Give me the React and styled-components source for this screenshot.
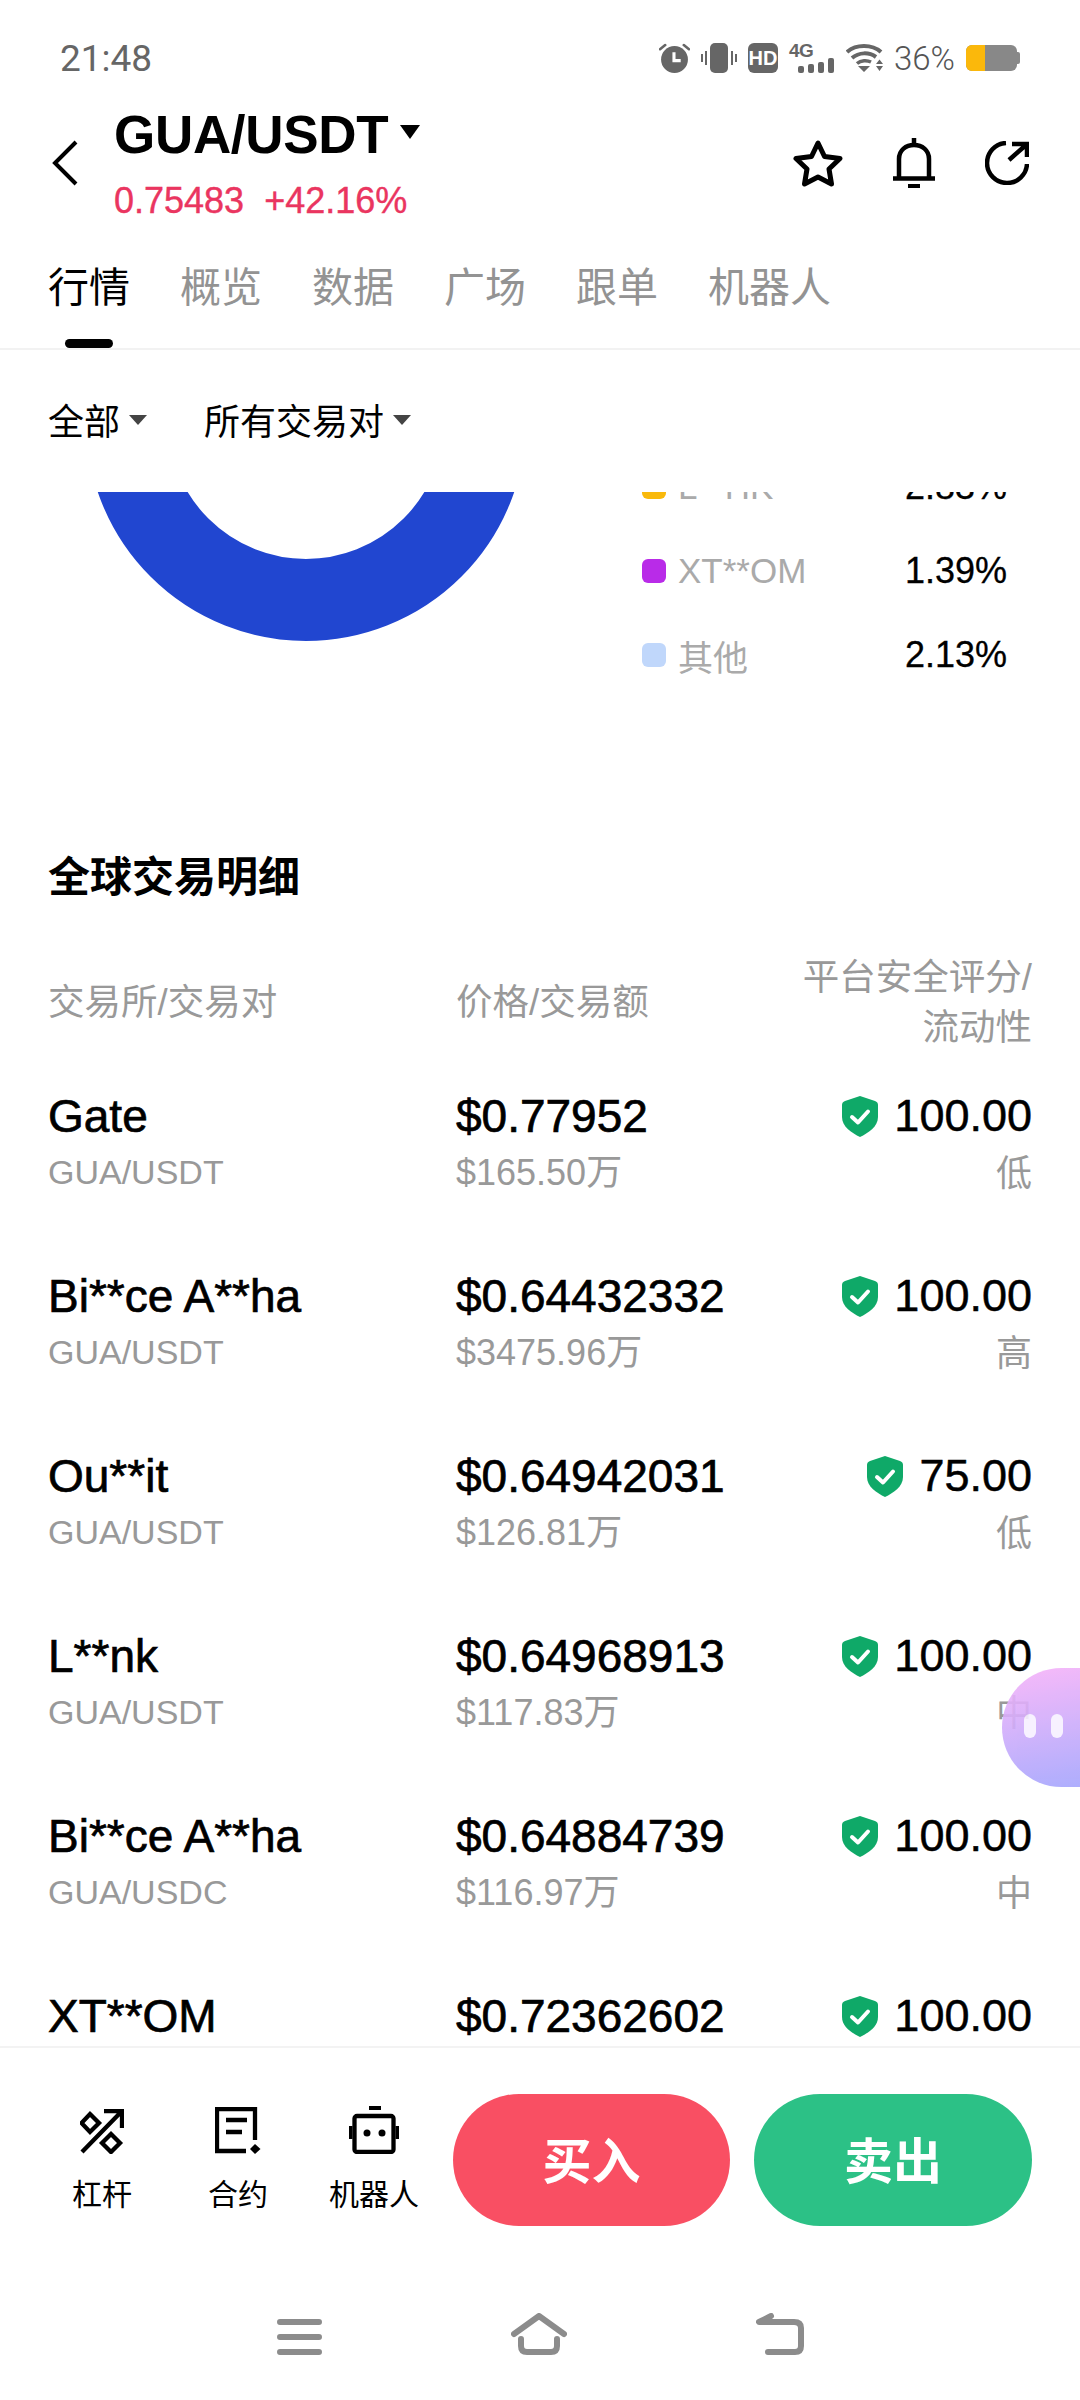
import React from "react";
import styled, { createGlobalStyle } from "styled-components";

const SANS = `"Liberation Sans", "Noto Sans CJK SC", sans-serif`;

const Global = createGlobalStyle`
  html, body { margin: 0; padding: 0; background: #fff; }
  * { box-sizing: border-box; }
`;

const Page = styled.div`
  position: relative;
  width: 1080px;
  height: 2400px;
  overflow: hidden;
  display: flex;
  flex-direction: column;
  background: #fff;
  color: #000;
  font-family: ${SANS};
`;

/* status bar */
const StatusBar = styled.div`
  flex: none;
  height: 116px;
  padding: 0 60px;
  display: flex;
  align-items: center;
  justify-content: space-between;
  color: #666;
`;
const Clock = styled.span`
  font-family: Roboto, sans-serif;
  font-size: 37px;
`;
const StatusIcons = styled.div`
  display: flex;
  align-items: center;
  gap: 11px;
`;
const HdBadge = styled.span`
  width: 30px;
  height: 30px;
  border-radius: 6px;
  background: #666;
  color: #fff;
  font: bold 20px/30px ${SANS};
  text-align: center;
`;
const Signal = styled.div`
  width: 46px;
  height: 30px;
  display: flex;
  flex-direction: column;
  color: #666;
`;
const SignalLabel = styled.span`
  font: bold 19px/15px ${SANS};
  letter-spacing: -0.5px;
`;
const Percent = styled.span`
  font-family: Roboto, sans-serif;
  font-weight: 300;
  font-size: 33px;
  color: #555;
`;
const Battery = styled.div`
  position: relative;
  width: 51px;
  height: 26px;
  margin-right: 3px;
  border-radius: 6px;
  overflow: hidden;
  background: #888;
`;
const BatteryLevel = styled.div`
  height: 100%;
  background: #fbb80b;
`;
const BatteryWrap = styled.div`
  display: flex;
  align-items: center;
  position: relative;
  &::after {
    content: "";
    position: absolute;
    right: 0;
    width: 3px;
    height: 12px;
    background: #888;
    border-radius: 0 2px 2px 0;
  }
`;

/* header */
const Header = styled.div`
  flex: none;
  height: 124px;
  padding: 0 51px 0 52px;
  display: flex;
  align-items: center;
`;
const BackIcon = styled.svg`
  width: 26px;
  height: 46px;
  margin-right: 36px;
  margin-top: -30px;
`;
const TitleBlock = styled.div`
  flex: 1;
  margin-top: -32px;
`;
const TitleRow = styled.div`
  display: flex;
  align-items: center;
  height: 58px;
`;
const Title = styled.span`
  font-size: 53px;
  font-weight: 700;
  letter-spacing: -0.3px;
`;
const TitleCaret = styled.span`
  width: 0;
  height: 0;
  margin-left: 12px;
  margin-top: -6px;
  border-left: 10px solid transparent;
  border-right: 10px solid transparent;
  border-top: 14px solid #000;
`;
const PriceLine = styled.div`
  margin-top: 19px;
  display: flex;
  gap: 20px;
  font-size: 36px;
  line-height: 36px;
  color: #ea3560;
  -webkit-text-stroke: 0.4px #ea3560;
`;
const HeaderActions = styled.div`
  display: flex;
  align-items: center;
  gap: 50px;
  margin-top: -30px;
`;

/* tabs */
const TabBar = styled.div`
  flex: none;
  height: 110px;
  padding: 0 48px;
  display: flex;
  gap: 50px;
  border-bottom: 2px solid #f2f2f2;
`;
const Tab = styled.div`
  display: flex;
  flex-direction: column;
  align-items: center;
  height: 108px;
  padding-top: 23px;
`;
const TabLabel = styled.span`
  font-size: 41px;
  line-height: 50px;
  color: ${(p) => (p.$active ? "#000" : "#939393")};
`;
const TabMark = styled.span`
  width: 48px;
  height: 9px;
  margin-top: auto;
  border-radius: 5px;
  background: #000;
`;

/* filter */
const FilterRow = styled.div`
  flex: none;
  height: 138px;
  margin-bottom: 4px;
  padding: 0 48px;
  display: flex;
  align-items: center;
  gap: 57px;
`;
const Filter = styled.div`
  display: flex;
  align-items: center;
  gap: 9px;
  font-size: 36px;
`;
const FilterCaret = styled.span`
  width: 0;
  height: 0;
  margin-top: 2px;
  border-left: 9px solid transparent;
  border-right: 9px solid transparent;
  border-top: 10px solid #444;
`;

/* scrolling content */
const Scroller = styled.div`
  flex: 1;
  min-height: 0;
  overflow: hidden;
`;
const ScrollContent = styled.div`
  margin-top: -291px;
`;
const ChartRow = styled.div`
  height: 496px;
  padding-left: 86px;
  display: flex;
`;
const Donut = styled.svg`
  flex: none;
  width: 440px;
  height: 440px;
`;
const Legend = styled.div`
  width: 365px;
  margin-left: 116px;
  align-self: flex-end;
`;
const LegendRow = styled.div`
  height: 84px;
  display: flex;
  align-items: center;
  font-size: 36px;
`;
const Swatch = styled.span`
  width: 24px;
  height: 24px;
  margin-right: 12px;
  border-radius: 6px;
  background: ${(p) => p.$color};
`;
const LegendName = styled.span`
  color: #aaa;
  font-size: 35px;
`;
const LegendValue = styled.span`
  margin-left: auto;
  -webkit-text-stroke: 0.3px #000;
`;
const SectionTitle = styled.h2`
  margin: 156px 0 0;
  padding: 0 48px;
  font-size: 42px;
  line-height: 50px;
  font-weight: 700;
`;
const TableGrid = styled.div`
  display: grid;
  grid-template-columns: 408px 1fr auto;
  padding: 0 48px;
`;
const HeaderGrid = styled(TableGrid)`
  margin-top: 50px;
  height: 100px;
  align-items: center;
  font-size: 36.5px;
  line-height: 50px;
  color: #999;
`;
const RightHead = styled.div`
  text-align: right;
`;
const Rows = styled.div`
  margin-top: 33px;
`;
const DataRow = styled(TableGrid)`
  height: 180px;
  align-content: start;
`;
const Main = styled.div`
  font-size: 46px;
  line-height: 60px;
  -webkit-text-stroke: 0.7px #000;
  white-space: nowrap;
`;
const Sub = styled.div`
  margin-top: ${(p) => (p.$money ? 3 : 2)}px;
  font-size: ${(p) => (p.$money ? 36 : 34)}px;
  line-height: 48px;
  color: #999;
`;
const Score = styled.div`
  display: flex;
  align-items: center;
  justify-content: flex-end;
  gap: 16px;
  font-size: 45px;
  line-height: 60px;
  -webkit-text-stroke: 0.5px #000;
`;
const Liquidity = styled.div`
  margin-top: 4px;
  font-size: 36px;
  line-height: 48px;
  color: #999;
  text-align: right;
`;
const Shield = styled.svg`
  width: 36px;
  height: 41px;
`;

/* bottom */
const BottomBar = styled.div`
  flex: none;
  height: 354px;
  border-top: 2px solid #f3f3f3;
  display: flex;
  flex-direction: column;
`;
const ActionRow = styled.div`
  display: flex;
  padding: 46px 48px 0 34px;
`;
const Tools = styled.div`
  display: flex;
  margin-right: 11px;
`;
const Tool = styled.div`
  width: 136px;
  display: flex;
  flex-direction: column;
  align-items: center;
  padding-top: 12px;
`;
const ToolIcon = styled.div`
  height: 48px;
  display: flex;
  align-items: flex-end;
`;
const ToolLabel = styled.span`
  margin-top: 21px;
  font-size: 30px;
  line-height: 40px;
`;
const TradeButton = styled.div`
  width: ${(p) => p.$w}px;
  height: 132px;
  margin-left: ${(p) => p.$gap}px;
  padding-bottom: 6px;
  border-radius: 66px;
  background: ${(p) => p.$color};
  color: #fff;
  display: flex;
  align-items: center;
  justify-content: center;
  font-size: 49px;
  font-weight: 700;
`;
const NavBar = styled.div`
  margin-top: 87px;
  display: flex;
  align-items: flex-end;
  justify-content: center;
  gap: 189px;
  color: #8c8c8c;
`;

const Bubble = styled.div`
  position: absolute;
  right: 0;
  top: 1668px;
  width: 78px;
  height: 119px;
  padding: 46px 17px 0 22px;
  border-radius: 60px 0 0 60px;
  background: linear-gradient(170deg, #f8b3f9, #a5a5fd);
  opacity: 0.9;
  display: flex;
  justify-content: space-between;
`;
const BubbleEye = styled.span`
  width: 12px;
  height: 24px;
  border-radius: 6px;
  background: #f7f0ff;
`;

const ShieldIcon = () => (
  <Shield viewBox="0 0 36 41">
    <path d="M18 0 L33 5 Q36 6 36 9 V21 C36 31 26 37 18 41 C10 37 0 31 0 21 V9 Q0 6 3 5 Z" fill="#0fa968" />
    <path d="M10 21 L16 26.5 L26 15.5" fill="none" stroke="#fff" strokeWidth="4" strokeLinecap="round" strokeLinejoin="round" />
  </Shield>
);

const stroke = { fill: "none", stroke: "currentColor" };

const legend = [
  { c: "#f9b90b", n: "L**HK", v: "2.83%" },
  { c: "#b92be8", n: "XT**OM", v: "1.39%" },
  { c: "#c0d7fb", n: "其他", v: "2.13%" },
];

const rows = [
  { n: "Gate", p: "GUA/USDT", a: "$0.77952", b: "$165.50万", s: "100.00", l: "低" },
  { n: "Bi**ce A**ha", p: "GUA/USDT", a: "$0.64432332", b: "$3475.96万", s: "100.00", l: "高" },
  { n: "Ou**it", p: "GUA/USDT", a: "$0.64942031", b: "$126.81万", s: "75.00", l: "低" },
  { n: "L**nk", p: "GUA/USDT", a: "$0.64968913", b: "$117.83万", s: "100.00", l: "中" },
  { n: "Bi**ce A**ha", p: "GUA/USDC", a: "$0.64884739", b: "$116.97万", s: "100.00", l: "中" },
  { n: "XT**OM", a: "$0.72362602", s: "100.00" },
];

const tabs = ["行情", "概览", "数据", "广场", "跟单", "机器人"];

export default function App() {
  return (
    <Page>
      <Global />
      <StatusBar>
        <Clock>21:48</Clock>
        <StatusIcons>
          <svg width="31" height="30" viewBox="0 0 30 29">
            <circle cx="15" cy="16" r="13" fill="#666" />
            <path d="M14.5 9 V17 H21" fill="none" stroke="#fff" strokeWidth="3" />
            <path d="M1 6 L6 2 M29 6 L24 2" stroke="#666" strokeWidth="2.5" strokeLinecap="round" />
          </svg>
          <svg width="36" height="30" viewBox="0 0 36 30">
            <rect x="9" y="0" width="18" height="30" rx="5" fill="#666" />
            <path d="M1 11 V19 M5 8 V22 M31 8 V22 M35 11 V19" stroke="#666" strokeWidth="2" />
          </svg>
          <HdBadge>HD</HdBadge>
          <Signal>
            <SignalLabel>4G</SignalLabel>
            <svg width="46" height="15" viewBox="0 0 46 15">
              <rect x="9" y="8" width="6" height="7" rx="2" fill="#666" />
              <rect x="19" y="6" width="6" height="9" rx="2" fill="#666" />
              <rect x="29" y="4" width="6" height="11" rx="2" fill="#666" />
              <rect x="39" y="0" width="6" height="15" rx="2" fill="#666" />
            </svg>
          </Signal>
          <svg width="37" height="28" viewBox="0 0 37 28" style={{ color: "#666" }}>
            <path d="M1 8 C10 0 26 0 35 8" {...stroke} strokeWidth="4" />
            <path d="M6 14 C13 8 23 8 30 13" {...stroke} strokeWidth="4" />
            <path d="M11 19.5 C15 16 21 16 25 18" {...stroke} strokeWidth="3.5" />
            <path d="M12 22 H24 L18 28 Z M30 20 L33.5 15.5 L37 20 Z M30 22 H37 L33.5 27 Z" fill="#666" />
          </svg>
          <Percent>36%</Percent>
          <BatteryWrap>
            <Battery>
              <BatteryLevel style={{ width: "37%" }} />
            </Battery>
          </BatteryWrap>
        </StatusIcons>
      </StatusBar>

      <Header>
        <BackIcon viewBox="0 0 26 46">
          <path d="M24 2 L3 23 L24 44" {...stroke} strokeWidth="4" />
        </BackIcon>
        <TitleBlock>
          <TitleRow>
            <Title>GUA/USDT</Title>
            <TitleCaret />
          </TitleRow>
          <PriceLine>
            <span>0.75483</span>
            <span>+42.16%</span>
          </PriceLine>
        </TitleBlock>
        <HeaderActions>
          <svg width="50" height="47" viewBox="0 0 50 47">
            <path d="M25 3 L31.5 16.5 L47 18.5 L36 29 L38.5 44 L25 37 L11.5 44 L14 29 L3 18.5 L18.5 16.5 Z" {...stroke} strokeWidth="5" strokeLinejoin="round" />
          </svg>
          <svg width="42" height="50" viewBox="0 0 42 50">
            <path d="M6 40 V21 C6 12 13 7 21 7 C29 7 36 12 36 21 V40" {...stroke} strokeWidth="4.5" />
            <path d="M0 40.5 H42 M21 0 V6" {...stroke} strokeWidth="4.5" />
            <rect x="15" y="46" width="12" height="4" fill="#000" />
          </svg>
          <svg width="44" height="44" viewBox="0 0 44 44">
            <path d="M21 2 A20 20 0 1 0 42 23" {...stroke} strokeWidth="4.5" />
            <path d="M24 19 L41 4 M27 3 H42 V16" {...stroke} strokeWidth="4.5" />
          </svg>
        </HeaderActions>
      </Header>

      <TabBar>
        {tabs.map((t, i) => (
          <Tab key={t}>
            <TabLabel $active={i === 0}>{t}</TabLabel>
            {i === 0 && <TabMark />}
          </Tab>
        ))}
      </TabBar>

      <FilterRow>
        <Filter>
          全部
          <FilterCaret />
        </Filter>
        <Filter>
          所有交易对
          <FilterCaret />
        </Filter>
      </FilterRow>

      <Scroller>
        <ScrollContent>
          <ChartRow>
            <Donut viewBox="0 0 440 440">
              <circle cx="220" cy="220" r="179" fill="none" stroke="#2146d0" strokeWidth="82" />
            </Donut>
            <Legend>
              {legend.map((l) => (
                <LegendRow key={l.n}>
                  <Swatch $color={l.c} />
                  <LegendName>{l.n}</LegendName>
                  <LegendValue>{l.v}</LegendValue>
                </LegendRow>
              ))}
            </Legend>
          </ChartRow>

          <SectionTitle>全球交易明细</SectionTitle>

          <HeaderGrid>
            <div>交易所/交易对</div>
            <div>价格/交易额</div>
            <RightHead>
              平台安全评分/
              <br />
              流动性
            </RightHead>
          </HeaderGrid>

          <Rows>
            {rows.map((r) => (
              <DataRow key={r.n + r.a}>
                <div>
                  <Main>{r.n}</Main>
                  {r.p && <Sub>{r.p}</Sub>}
                </div>
                <div>
                  <Main>{r.a}</Main>
                  {r.b && <Sub $money>{r.b}</Sub>}
                </div>
                <div>
                  <Score>
                    <ShieldIcon />
                    {r.s}
                  </Score>
                  {r.l && <Liquidity>{r.l}</Liquidity>}
                </div>
              </DataRow>
            ))}
          </Rows>
        </ScrollContent>
      </Scroller>

      <BottomBar>
        <ActionRow>
          <Tools>
            <Tool>
              <ToolIcon>
                <svg width="44" height="45" viewBox="0 0 44 45">
                  <path d="M2 43 L41 3 M24 2 H42 V19" {...stroke} strokeWidth="4.3" />
                  <path d="M10 5 L19 14 L10 23 L1.5 14 Z M31 25 L40 34 L31 43 L22 34 Z" {...stroke} strokeWidth="4.3" />
                </svg>
              </ToolIcon>
              <ToolLabel>杠杆</ToolLabel>
            </Tool>
            <Tool>
              <ToolIcon>
                <svg width="46" height="47" viewBox="0 0 46 47">
                  <path d="M31 44 H2 V2 H40 V33" {...stroke} strokeWidth="4.3" />
                  <path d="M11 13 H32 M11 25 H27" {...stroke} strokeWidth="4.3" />
                  <path d="M40 37 L45.5 42 L40 47 L35 42 Z" fill="#000" />
                </svg>
              </ToolIcon>
              <ToolLabel>合约</ToolLabel>
            </Tool>
            <Tool>
              <ToolIcon>
                <svg width="50" height="48" viewBox="0 0 50 48">
                  <rect x="20" y="0" width="12" height="4" fill="#000" />
                  <rect x="5.5" y="10" width="39" height="36" rx="2.5" {...stroke} strokeWidth="4.3" />
                  <rect x="0" y="20" width="3.5" height="13" fill="#000" />
                  <rect x="46.5" y="20" width="3.5" height="13" fill="#000" />
                  <circle cx="18" cy="27" r="3.5" fill="#000" />
                  <circle cx="33" cy="27" r="3.5" fill="#000" />
                </svg>
              </ToolIcon>
              <ToolLabel>机器人</ToolLabel>
            </Tool>
          </Tools>
          <TradeButton $w={277} $gap={0} $color="#f94f63">买入</TradeButton>
          <TradeButton $w={278} $gap={24} $color="#2cc186">卖出</TradeButton>
        </ActionRow>
        <NavBar>
          <svg width="45" height="36" viewBox="0 0 45 36">
            <path d="M3 3 H42 M3 18 H42 M3 33 H42" {...stroke} strokeWidth="6" strokeLinecap="round" />
          </svg>
          <svg width="56" height="42" viewBox="0 0 56 42">
            <path d="M3 21 L28 3 L53 21" {...stroke} strokeWidth="6" strokeLinecap="round" strokeLinejoin="round" />
            <path d="M10 26 V33 Q10 39 16 39 H40 Q46 39 46 33 V26" {...stroke} strokeWidth="6" strokeLinecap="round" />
          </svg>
          <svg width="48" height="42" viewBox="0 0 48 42">
            <path d="M15 3 L3 9 H38 Q45 9 45 15 V33 Q45 39 39 39 H12" {...stroke} strokeWidth="6" strokeLinecap="round" strokeLinejoin="round" />
          </svg>
        </NavBar>
      </BottomBar>

      <Bubble>
        <BubbleEye />
        <BubbleEye />
      </Bubble>
    </Page>
  );
}
